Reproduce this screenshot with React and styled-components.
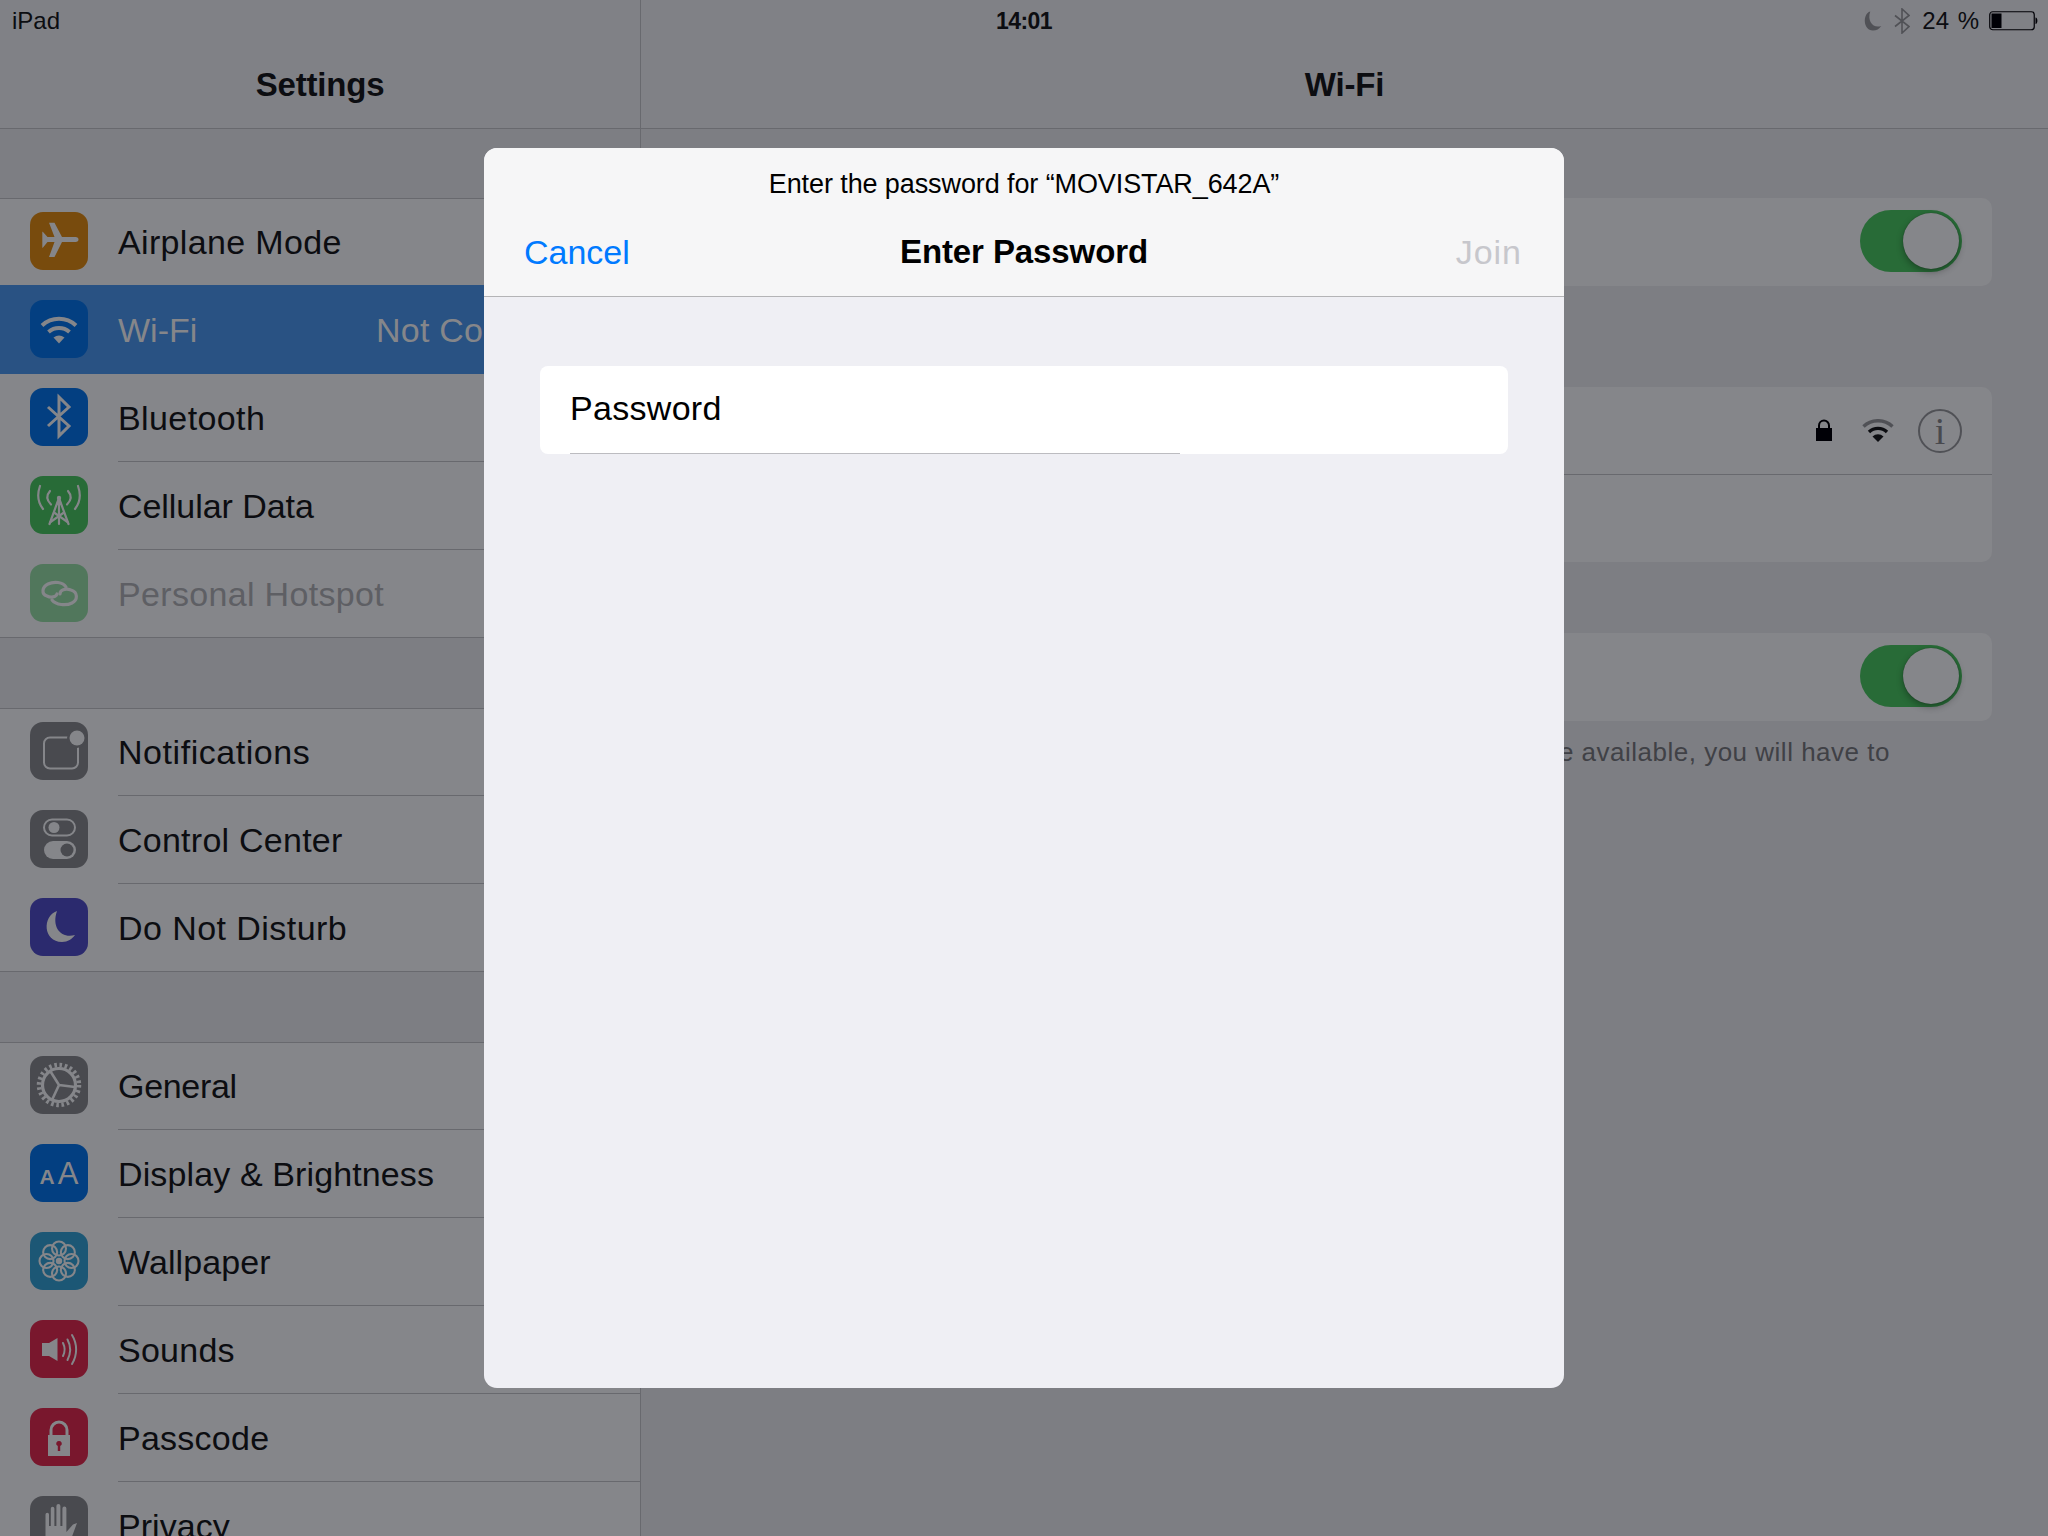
import React from "react";
import styled, { createGlobalStyle } from "styled-components";

const GLYPH = "#85868a";
const LINE = "#68696e";
const TILE_GREY = "#494a4f";
const TILE_BLUE = "#033f81";
const TILE_GREEN = "#286b37";
const TILE_RED = "#79172d";
const FONT = `"Liberation Sans", Arial, sans-serif`;

const GlobalStyle = createGlobalStyle`
  html, body {
    margin: 0;
    padding: 0;
    background: #7d7e83;
    font-family: ${FONT};
  }
  * {
    box-sizing: border-box;
  }
`;

const Screen = styled.div`
  position: relative;
  display: flex;
  width: 2048px;
  height: 1536px;
  overflow: hidden;
  background: #7d7e83;
  color: #0c0d11;
`;

const StatusBar = styled.div`
  position: absolute;
  top: 0;
  left: 0;
  right: 0;
  height: 40px;
  display: grid;
  grid-template-columns: 1fr auto 1fr;
  align-items: center;
  padding: 2px 12px 0;
  font-size: 24px;
`;

const Clock = styled.span`
  font-size: 23px;
  font-weight: 700;
  letter-spacing: -0.6px;
`;

const StatusRight = styled.div`
  display: flex;
  align-items: center;
  justify-content: flex-end;
  gap: 12px;
  margin-right: -3px;
`;

const Percent = styled.span`
  word-spacing: 2px;
  margin-right: -2px;
`;

const Sidebar = styled.aside`
  width: 641px;
  flex: none;
  height: 100%;
  overflow: hidden;
  border-right: 1px solid ${LINE};
`;

const Detail = styled.main`
  flex: 1;
  height: 100%;
  overflow: hidden;
`;

const NavBar = styled.header`
  height: 129px;
  padding-top: 42px;
  display: flex;
  align-items: center;
  justify-content: center;
  background: #808186;
  border-bottom: 1px solid ${LINE};
  font-size: 33px;
  font-weight: 700;
  letter-spacing: -0.2px;
`;

const SettingsList = styled.div`
  display: flex;
  flex-direction: column;
  gap: 70px;
  padding-top: 69px;
`;

const Group = styled.section`
  background: #85868a;
  border-top: 1px solid ${LINE};
  border-bottom: 1px solid ${LINE};
`;

const Row = styled.div`
  position: relative;
  height: ${(p) => (p.$selected ? "89px" : "88px")};
  display: flex;
  align-items: flex-start;
  padding: ${(p) => (p.$selected ? "15px" : "14px")} 34px 0 30px;
  background: ${(p) => (p.$selected ? "#295283" : "transparent")};
  color: ${(p) => (p.$selected ? GLYPH : p.$disabled ? "#5e5f64" : "#0c0d11")};
  margin-top: ${(p) => (p.$selected ? "-1px" : "0")};

  &:first-child {
    height: 87px;
    padding-top: 13px;
  }

  &:last-child {
    height: 87px;
  }

  &:not(:last-child)::after {
    content: "";
    position: absolute;
    left: 118px;
    right: 0;
    bottom: 0;
    height: 1px;
    background: ${(p) => (p.$selected ? "transparent" : LINE)};
  }
`;

const IconTile = styled.div`
  width: 58px;
  height: 58px;
  flex: none;
  border-radius: 13px;
  background: ${(p) => p.$color};
  color: ${GLYPH};
  opacity: ${(p) => (p.$faded ? 0.55 : 1)};
  overflow: hidden;
  display: flex;
  align-items: flex-end;
  justify-content: center;

  & svg {
    display: block;
  }
`;

const TileLetters = styled.span`
  width: 100%;
  height: 100%;
  display: flex;
  align-items: center;
  justify-content: center;
  gap: 3px;
  line-height: 1;
`;

const TileSmallA = styled.span`
  font-size: 21px;
  font-weight: 700;
  margin-top: 6px;
`;

const TileBigA = styled.span`
  font-size: 31px;
  margin-top: 0;
`;

const RowLabel = styled.span`
  margin-left: 30px;
  font-size: 34px;
  letter-spacing: ${(p) => p.$tracking ?? 0.25}px;
  line-height: 60px;
  white-space: nowrap;
`;

const RowValue = styled.span`
  margin-left: auto;
  font-size: 34px;
  letter-spacing: 0.25px;
  line-height: 60px;
  white-space: nowrap;
`;

const DetailList = styled.div`
  padding: 69px 56px 0;
  display: flex;
  flex-direction: column;
`;

const Card = styled.section`
  background: #85868a;
  border-radius: 10px;
  margin-bottom: ${(p) => p.$gap || "0"};
`;

const CardRow = styled.div`
  height: ${(p) => p.$height || "88px"};
  display: flex;
  align-items: center;
  gap: 30px;
  padding: 0 30px ${(p) => (p.$raised ? "2px" : "0")};
  font-size: 34px;
  border-bottom: ${(p) => (p.$line ? `1px solid ${LINE}` : "none")};
`;

const CardLabel = styled.span`
  flex: 1;
  padding-left: ${(p) => (p.$indent ? "44px" : "0")};
`;

const Toggle = styled.div`
  position: relative;
  width: 102px;
  height: 62px;
  flex: none;
  border-radius: 31px;
  background: ${TILE_GREEN};

  &::after {
    content: "";
    position: absolute;
    top: 3px;
    right: 3px;
    width: 56px;
    height: 56px;
    border-radius: 50%;
    background: ${GLYPH};
    box-shadow: 0 3px 7px rgba(0, 0, 0, 0.32), 0 0 1px rgba(0, 0, 0, 0.4);
  }
`;

const InfoBadge = styled.span`
  width: 44px;
  height: 44px;
  flex: none;
  margin-left: -6px;
  border-radius: 50%;
  border: 2px solid #505156;
  color: #48494e;
  display: flex;
  align-items: center;
  justify-content: center;
  font-family: "Liberation Serif", serif;
  font-size: 38px;
  line-height: 1;
`;

const Footnote = styled.p`
  margin: 15px 0 0;
  padding-left: 35px;
  width: 1240px;
  font-size: 26px;
  line-height: 32px;
  letter-spacing: 0.5px;
  color: #404146;
`;

const Modal = styled.div`
  position: absolute;
  top: 148px;
  left: 484px;
  width: 1080px;
  height: 1240px;
  border-radius: 13px;
  overflow: hidden;
  background: #efeff4;
  color: #000;
`;

const ModalHeader = styled.header`
  height: 149px;
  padding-top: 21px;
  background: #f6f6f7;
  border-bottom: 1px solid #b4b4b6;
`;

const ModalPrompt = styled.div`
  text-align: center;
  font-size: 27px;
  letter-spacing: -0.1px;
  line-height: 30px;
`;

const ModalNav = styled.div`
  display: grid;
  grid-template-columns: 1fr auto 1fr;
  align-items: center;
  padding: 0 40px;
  margin-top: 28px;
  height: 50px;
  font-size: 34px;
`;

const Cancel = styled.span`
  color: #007aff;
`;

const ModalTitle = styled.span`
  font-size: 33px;
  font-weight: 700;
  letter-spacing: -0.1px;
`;

const Join = styled.span`
  color: #c7c7cc;
  letter-spacing: 1px;
  text-align: right;
  margin-right: 2px;
`;

const PasswordField = styled.div`
  margin: 69px 56px 0;
  height: 88px;
  border-radius: 8px;
  background: #fff;
  display: flex;
  flex-direction: column;
`;

const PasswordLabel = styled.span`
  flex: 1;
  padding: 11px 0 0 30px;
  font-size: 34px;
  letter-spacing: 0.3px;
  line-height: 62px;
`;

const PasswordRule = styled.div`
  width: 610px;
  height: 1px;
  margin-left: 30px;
  background: #bcbcc0;
`;

const Svg = ({ size = 58, width, height, box = "0 0 58 58", children }) => (
  <svg
    width={width || size}
    height={height || size}
    viewBox={box}
    fill="none"
    stroke="none"
  >
    {children}
  </svg>
);

const AirplaneIcon = () => (
  <Svg>
    <path
      fill="currentColor"
      d="M45.5 25C49.5 25 49.5 30 45.5 30L32 30 24.5 45 19 45 24.5 30 17.5 30 12.8 35.7 12.3 35.7 12.3 19.7 12.8 19.7 17.5 25 24.5 25 19 10.7 24.5 10.7 32 25Z"
    />
  </Svg>
);

const WifiIcon = () => (
  <Svg>
    <g stroke="currentColor" strokeWidth="4">
      <path d="M12 25.5A25 25 0 0 1 46 25.5" />
      <path d="M18.5 32A16 16 0 0 1 39.5 32" />
    </g>
    <path
      fill="currentColor"
      d="M29 43.5L23.5 37.5A9 9 0 0 1 34.5 37.5Z"
    />
  </Svg>
);

const BluetoothIcon = () => (
  <Svg>
    <path
      stroke="currentColor"
      strokeWidth="3"
      d="M18 19L39 38 29 48V9L39 19 18 38"
    />
  </Svg>
);

const CellularIcon = () => (
  <Svg>
    <g stroke="currentColor" strokeWidth="2.2" strokeLinecap="round">
      <path d="M29 22L19.5 48M29 22L38.5 48M29 22V48" />
      <path d="M24 36.5L37.5 46M34 36.5L20.5 46" />
      <path d="M10 10C7.5 17 7.5 26 13 33M48 10C50.5 17 50.5 26 45 33" />
      <path d="M20 15C16.5 19 16.5 24 21 28.5M38 15C41.5 19 41.5 24 37 28.5" />
    </g>
    <circle cx="29" cy="22" r="2.2" fill="currentColor" />
  </Svg>
);

const HotspotIcon = () => (
  <Svg>
    <g stroke="currentColor" strokeWidth="3.2" strokeLinecap="round">
      <path d="M36 23C33 18 24 17 18 20 12 23 11 30 17 32 21 34 26 33 27 30" />
      <path d="M22 36C26 41 36 42 42 39 48 36 48 28 41 26 35 24 30 26 30 30" />
    </g>
  </Svg>
);

const NotificationIcon = () => (
  <Svg>
    <rect
      x="14"
      y="15.5"
      width="34"
      height="31"
      rx="6"
      stroke="currentColor"
      strokeWidth="2"
    />
    <circle cx="47" cy="16" r="10" fill={TILE_GREY} />
    <circle cx="47" cy="16" r="7.5" fill="currentColor" />
  </Svg>
);

const ControlIcon = () => (
  <Svg>
    <rect
      x="14"
      y="9.5"
      width="31"
      height="16"
      rx="8"
      stroke="currentColor"
      strokeWidth="2"
    />
    <circle cx="24" cy="17.5" r="5.5" fill="currentColor" />
    <rect x="14" y="31" width="32" height="18" rx="9" fill="currentColor" />
    <circle cx="37" cy="40" r="6.5" fill={TILE_GREY} />
  </Svg>
);

const MoonIcon = () => (
  <Svg>
    <path
      fill="currentColor"
      d="M27 13C12 18 13 44 32 44 38 44 42 41 45 37 32 41 21 30 27 13Z"
    />
  </Svg>
);

const GearIcon = () => (
  <Svg>
    <circle
      cx="29"
      cy="29"
      r="20"
      stroke="currentColor"
      strokeWidth="4.5"
      strokeDasharray="2.6 2.63"
    />
    <circle cx="29" cy="29" r="16.5" stroke="currentColor" strokeWidth="3.2" />
    <path
      stroke="currentColor"
      strokeWidth="2.6"
      d="M29 29L20.5 15.5M29 29L45 31M29 29L22 44"
    />
  </Svg>
);

const FlowerIcon = () => (
  <Svg>
    <g stroke="currentColor" strokeWidth="2.1">
      {[0, 45, 90, 135, 180, 225, 270, 315].map((deg) => (
        <circle
          key={deg}
          cx="29"
          cy="16.5"
          r="7"
          transform={`rotate(${deg} 29 29)`}
        />
      ))}
    </g>
    <circle cx="29" cy="29" r="3.2" fill="currentColor" />
  </Svg>
);

const SoundIcon = () => (
  <Svg>
    <path fill="currentColor" d="M12 23H19L27.5 18V41L19 36H12Z" />
    <g stroke="currentColor" strokeWidth="2" strokeLinecap="round">
      <path d="M33 23C35 27 35 32 33 36" />
      <path d="M37.5 19.5C41 26 41 33 37.5 40" />
      <path d="M42 15C47.5 24 47.5 35 42 44" />
    </g>
  </Svg>
);

const LockIcon = () => (
  <Svg>
    <path
      stroke="currentColor"
      strokeWidth="3"
      d="M21 28V22A8 8 0 0 1 37 22V28"
    />
    <path
      fill="currentColor"
      fillRule="evenodd"
      d="M18 27H40V48H18ZM29 33A2.6 2.6 0 0 0 27.8 38V43H30.2V38A2.6 2.6 0 0 0 29 33Z"
    />
  </Svg>
);

const HandIcon = () => (
  <Svg>
    <path
      fill="currentColor"
      d="M15.5 40V18.5A1.7 1.7 0 0 1 19 18.5V30H20.8V12.5A1.8 1.8 0 0 1 24.4 12.5V30H26.4V10A2 2 0 0 1 30.4 10V30H32.4V12.5A2 2 0 0 1 36.4 12.5V36L43 28.5 47 27 40 46V58H20L15.5 44Z"
    />
  </Svg>
);

const DisplayIcon = () => (
  <TileLetters>
    <TileSmallA>A</TileSmallA>
    <TileBigA>A</TileBigA>
  </TileLetters>
);

// tracking evens out the width gap between Liberation Sans and the device font
const GROUPS = [
  [
    { label: "Airplane Mode", color: "#784b0d", Icon: AirplaneIcon, tracking: 0.35 },
    {
      label: "Wi-Fi",
      color: TILE_BLUE,
      Icon: WifiIcon,
      value: "Not Connected",
      selected: true,
      tracking: 0,
    },
    { label: "Bluetooth", color: TILE_BLUE, Icon: BluetoothIcon, tracking: 0.4 },
    { label: "Cellular Data", color: TILE_GREEN, Icon: CellularIcon, tracking: -0.05 },
    {
      label: "Personal Hotspot",
      color: TILE_GREEN,
      Icon: HotspotIcon,
      disabled: true,
      tracking: 0.33,
    },
  ],
  [
    { label: "Notifications", color: TILE_GREY, Icon: NotificationIcon, tracking: 0.55 },
    { label: "Control Center", color: TILE_GREY, Icon: ControlIcon },
    { label: "Do Not Disturb", color: "#2b2a6e", Icon: MoonIcon, tracking: 0.44 },
  ],
  [
    { label: "General", color: TILE_GREY, Icon: GearIcon, tracking: -0.3 },
    { label: "Display & Brightness", color: TILE_BLUE, Icon: DisplayIcon, tracking: 0.12 },
    { label: "Wallpaper", color: "#1c5775", Icon: FlowerIcon, tracking: 0.1 },
    { label: "Sounds", color: TILE_RED, Icon: SoundIcon },
    { label: "Passcode", color: TILE_RED, Icon: LockIcon },
    { label: "Privacy", color: TILE_GREY, Icon: HandIcon, tracking: 0.06 },
  ],
];

const App = () => (
  <Screen>
    <GlobalStyle />

    <Sidebar>
      <NavBar>Settings</NavBar>
      <SettingsList>
        {GROUPS.map((rows, i) => (
          <Group key={i}>
            {rows.map(({ label, color, Icon, value, selected, disabled, tracking }) => (
              <Row key={label} $selected={selected} $disabled={disabled}>
                <IconTile $color={color} $faded={disabled}>
                  <Icon />
                </IconTile>
                <RowLabel $tracking={tracking}>{label}</RowLabel>
                {value && <RowValue>{value}</RowValue>}
              </Row>
            ))}
          </Group>
        ))}
      </SettingsList>
    </Sidebar>

    <Detail>
      <NavBar>Wi-Fi</NavBar>
      <DetailList>
        <Card $gap="101px">
          <CardRow $raised>
            <CardLabel>Wi-Fi</CardLabel>
            <Toggle />
          </CardRow>
        </Card>
        <Card $gap="71px">
          <CardRow $line>
            <CardLabel $indent>MOVISTAR_642A</CardLabel>
            <Svg width={16} height={23} box="0 0 16 23">
              <path
                stroke="#000006"
                strokeWidth="2"
                d="M3 10V6.5A5 5 0 0 1 13 6.5V10"
              />
              <rect y="9" width="16" height="13" fill="#000006" />
            </Svg>
            <Svg width={32} height={24} box="0 0 32 24">
              <path
                stroke="#505156"
                strokeWidth="3.4"
                d="M1.5 7.5A21 21 0 0 1 30.5 7.5"
              />
              <path
                stroke="#0c0d11"
                strokeWidth="3.4"
                d="M7 13A13 13 0 0 1 25 13"
              />
              <path fill="#0c0d11" d="M16 23L10.5 17.5A8 8 0 0 1 21.5 17.5Z" />
            </Svg>
            <InfoBadge>i</InfoBadge>
          </CardRow>
          <CardRow $height="87px">
            <CardLabel $indent>Other...</CardLabel>
          </CardRow>
        </Card>
        <Card>
          <CardRow $raised>
            <CardLabel>Ask to Join Networks</CardLabel>
            <Toggle />
          </CardRow>
        </Card>
        <Footnote>
          Known networks will be joined automatically. If no known networks are
          available, you will have to manually select a network.
        </Footnote>
      </DetailList>
    </Detail>

    <StatusBar>
      <span>iPad</span>
      <Clock>14:01</Clock>
      <StatusRight>
        <Svg width={22} height={22} box="0 0 58 58">
          <path
            fill="#505156"
            d="M27 4C6 10 8 54 34 54 44 54 50 50 56 42 36 50 18 30 27 4Z"
          />
        </Svg>
        <Svg width={16} height={26} box="0 0 16 26">
          <path
            stroke="#505156"
            strokeWidth="1.6"
            d="M1 7.5L15 18.5 8 25V1L15 7.5 1 18.5"
          />
        </Svg>
        <Percent>24 %</Percent>
        <Svg width={50} height={20} box="0 0 50 20">
          <rect
            x="0.75"
            y="0.75"
            width="44.5"
            height="18"
            rx="3"
            stroke="#000006"
            strokeWidth="1.2"
          />
          <rect x="2.5" y="2.5" width="10" height="14.5" fill="#000006" />
          <path fill="#000006" d="M46.5 6.5C49 6.5 49 13 46.5 13Z" />
        </Svg>
      </StatusRight>
    </StatusBar>

    <Modal>
      <ModalHeader>
        <ModalPrompt>Enter the password for “MOVISTAR_642A”</ModalPrompt>
        <ModalNav>
          <Cancel>Cancel</Cancel>
          <ModalTitle>Enter Password</ModalTitle>
          <Join>Join</Join>
        </ModalNav>
      </ModalHeader>
      <PasswordField>
        <PasswordLabel>Password</PasswordLabel>
        <PasswordRule />
      </PasswordField>
    </Modal>
  </Screen>
);

export default App;
